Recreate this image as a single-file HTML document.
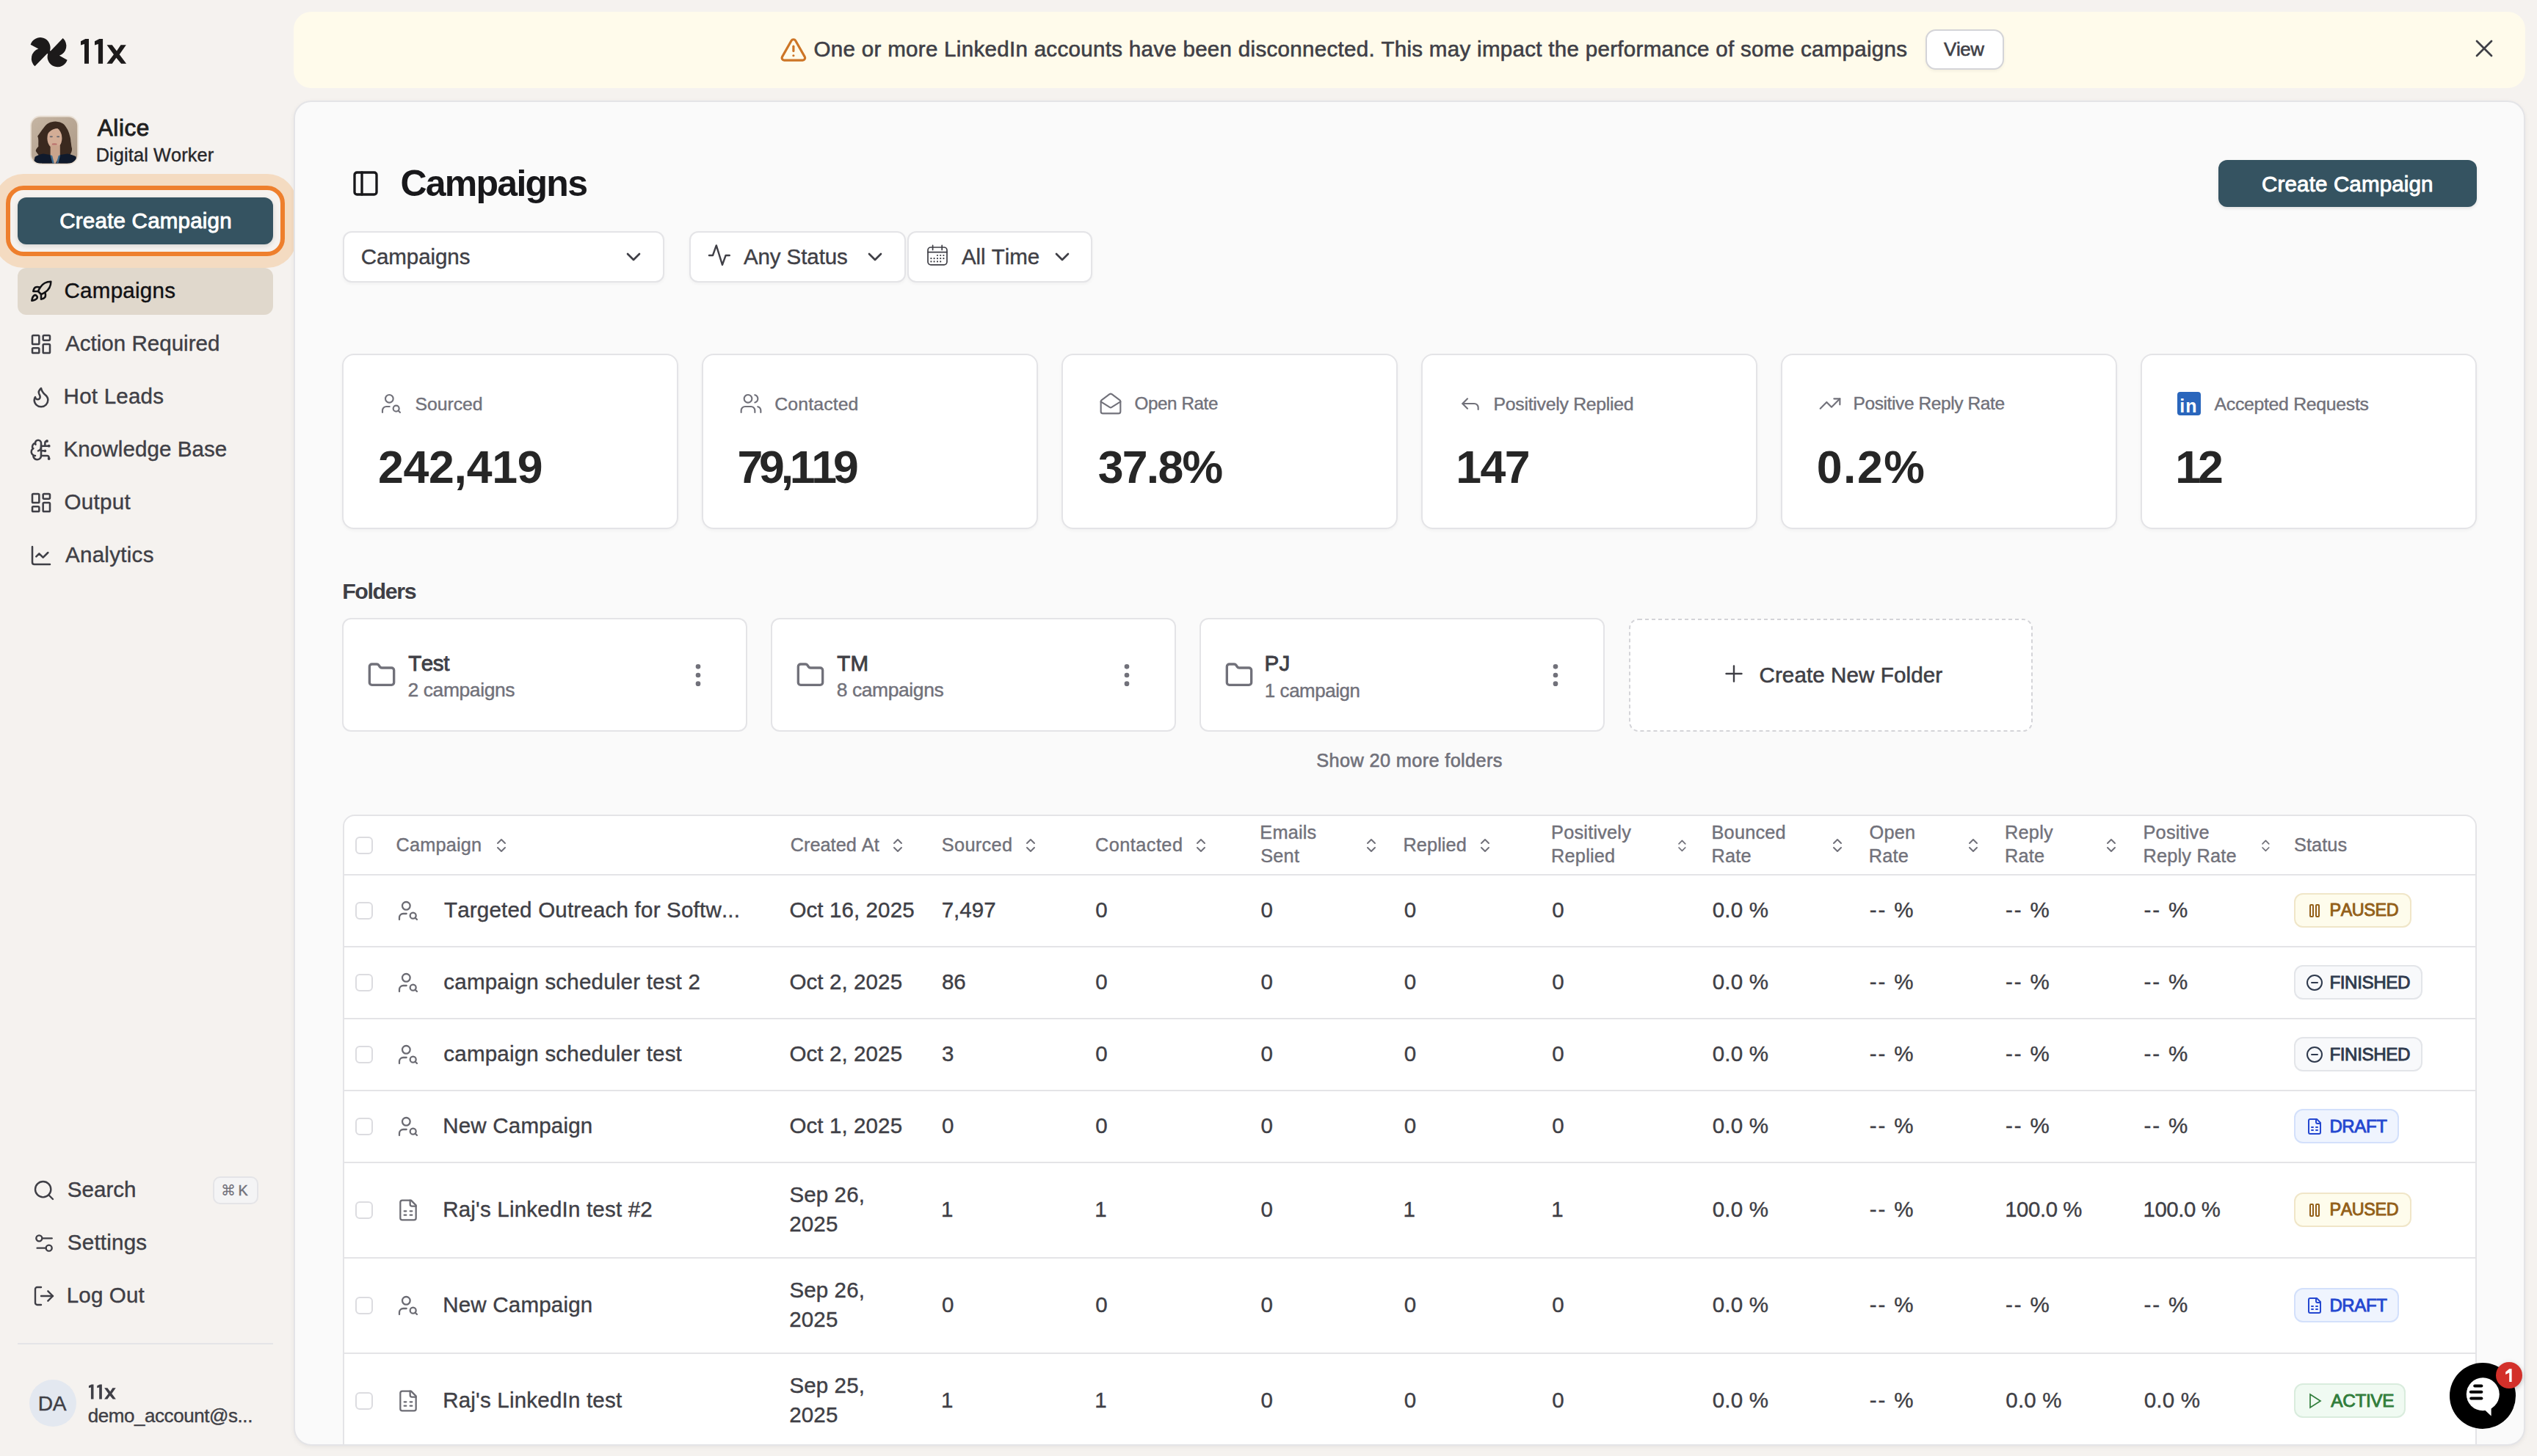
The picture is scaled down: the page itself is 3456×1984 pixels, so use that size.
<!DOCTYPE html>
<html><head><meta charset="utf-8"><title>Campaigns</title>
<style>
html,body{margin:0;padding:0;}
@media (min-width:2400px){ html{zoom:2;} }
body{width:1728px;height:992px;overflow:hidden;background:#f5f2ef;font-family:"Liberation Sans", sans-serif;position:relative;}
.t{position:absolute;white-space:nowrap;font-kerning:none;font-feature-settings:'kern' 0;}
.b{position:absolute;}
.ic{position:absolute;overflow:visible;}
</style></head><body>
<svg class="ic" style="left:18px;top:22px;width:32px;height:27px" viewBox="0 0 64 54"><g fill="#1c1a1a"><path d="M11.5 46.3 L31.9 25.2 A13.2 13.2 0 1 0 5.6 16.7 L16.3 22.6 A14 14 0 0 0 11.5 46.3 Z"/><path d="M49.7 8.1 L29.3 29.2 A13.2 13.2 0 1 0 55.6 37.7 L44.9 31.8 A14 14 0 0 0 49.7 8.1 Z"/><circle cx="30.6" cy="27.2" r="2.6"/></g></svg>
<svg class="ic" style="left:50px;top:22px;width:40px;height:27px" viewBox="0 0 80 54"><g fill="#1c1a1a"><path d="M10 12.2 L16.3 9.1 L21 9.1 L21 42.7 L15 42.7 L15 15.9 L10 17.4 Z"/><path d="M29 12.2 L35.3 9.1 L40.1 9.1 L40.1 42.7 L33.9 42.7 L33.9 15.9 L29 17.4 Z"/><path d="M45.6 17.2 L52.7 17.2 L59 25.6 L64.5 17.2 L71.8 17.2 L62.7 30.2 L72.1 42.7 L65.1 42.7 L58.4 34.7 L52.7 42.7 L45.4 42.7 L54.9 30.2 Z"/></g></svg>
<svg class="ic" style="left:20px;top:78.5px;width:34px;height:34px" viewBox="0 0 34 34"><defs><clipPath id="av"><rect x="1.4" y="1.2" width="31.2" height="31.6" rx="6"/></clipPath><linearGradient id="avbg" x1="0" y1="0" x2="1" y2="1"><stop offset="0" stop-color="#c6b6a4"/><stop offset="1" stop-color="#ab9885"/></linearGradient></defs><rect x="0.5" y="0.3" width="33" height="33.4" rx="7" fill="#e9e0d5"/><g clip-path="url(#av)"><rect x="0" y="0" width="34" height="34" fill="url(#avbg)"/><path d="M17.8 4.2 C14 4.3 11.8 5.8 10.2 8 C8.2 10.6 7 12.4 5.6 14.2 C6.6 16.5 5.9 19 6.2 21.2 C5.2 22.3 4.2 23.4 4.4 24.5 C5.4 26 6.6 27.4 7.2 28.6 L9 34 L25.8 34 L27.6 27.2 C28.6 25.6 29.2 24 29 22.6 C28.4 20.6 28.6 19.4 28.2 17.9 C28.2 16.4 27.9 15.2 27.6 14.2 C26.9 11.6 26.2 9.8 25.3 8.6 C24.2 6.4 22.6 4.6 17.8 4.2 Z" fill="#3a291f"/><ellipse cx="17.2" cy="15.6" rx="5" ry="7.1" fill="#d3ad96"/><path d="M11.8 8.8 C14 7.2 19.5 6.6 22.6 9.6 C21 8.9 18.4 8.7 16.2 9.6 C14.6 10.3 13 11.5 12 13.4 Z" fill="#3a291f"/><rect x="14.3" y="20.6" width="6.6" height="13.4" fill="#c9a48c"/><path d="M2.6 34 L3.8 28.4 C5.5 27.2 7.6 26.5 9.5 26.2 L14.2 27 L17.2 34 L21.1 27 L26 26.2 C28.2 26.6 30.4 27.3 31.8 28.2 L32.4 34 Z" fill="#101a2c"/><path d="M14.2 27 L15.6 27.6 L17.2 34 L16 34 Z" fill="#3f6b8c"/><path d="M21.1 27 L19.8 27.6 L18.2 34 L19.4 34 Z" fill="#3f6b8c"/><ellipse cx="14.9" cy="14.6" rx="1.1" ry="0.5" fill="#6b6a70"/><ellipse cx="19.6" cy="14.6" rx="1.1" ry="0.5" fill="#6b6a70"/><ellipse cx="17.1" cy="19.7" rx="1.8" ry="0.6" fill="#b9716c"/></g></svg>
<div class="t " style="left:66.37px;top:77.35px;font-size:15.8px;line-height:19.75px;color:#1f1f1f;font-weight:400;letter-spacing:0.272px;-webkit-text-stroke:0.45px #1f1f1f;">Alice</div>
<div class="t " style="left:65.36px;top:98.20px;font-size:12.66px;line-height:15.82px;color:#27272a;font-weight:400;letter-spacing:0.058px;-webkit-text-stroke:0.2px #27272a;">Digital Worker</div>
<div class="b" style="left:4.00px;top:126.50px;width:190.00px;height:47.80px;background:#f5f2ef;border:3px solid #ee7f2d;border-radius:12px;box-sizing:border-box;box-shadow:0 0 0 8px #f4dbc1;"></div>
<div class="b" style="left:12.00px;top:134.50px;width:174.00px;height:32.00px;background:#355361;border-radius:6px;box-shadow:0 1px 3px rgba(0,0,0,.12);"></div>
<div class="t " style="left:40.65px;top:141.25px;font-size:14.77px;line-height:18.46px;color:#ffffff;font-weight:400;letter-spacing:0.104px;-webkit-text-stroke:0.45px #ffffff;">Create Campaign</div>
<div class="b" style="left:12.00px;top:182.50px;width:174.00px;height:32.00px;background:#e0d8cc;border-radius:6px;"></div>
<svg class="ic" style="left:20.00px;top:190.50px;width:16px;height:16px;color:#111114;" viewBox="0 0 24 24" fill="none" stroke="currentColor" stroke-width="1.9" stroke-linecap="round" stroke-linejoin="round"><path d="M4.5 16.5c-1.5 1.26-2 5-2 5s3.74-.5 5-2c.71-.84.7-2.13-.09-2.91a2.18 2.18 0 0 0-2.91-.09z"/><path d="m12 15-3-3a22 22 0 0 1 2-3.95A12.88 12.88 0 0 1 22 2c0 2.72-.78 7.5-6 11a22.35 22.35 0 0 1-4 2z"/><path d="M9 12H4s.55-3.03 2-4c1.62-1.08 5 0 5 0"/><path d="M12 15v5s3.03-.55 4-2c1.08-1.62 0-5 0-5"/></svg>
<div class="t " style="left:43.75px;top:188.95px;font-size:14.77px;line-height:18.46px;color:#111114;font-weight:400;letter-spacing:0.134px;-webkit-text-stroke:0.2px #111114;">Campaigns</div>
<svg class="ic" style="left:20.00px;top:226.70px;width:16px;height:16px;color:#3f3f46;" viewBox="0 0 24 24" fill="none" stroke="currentColor" stroke-width="1.9" stroke-linecap="round" stroke-linejoin="round"><rect width="7" height="9" x="3" y="3" rx="1"/><rect width="7" height="5" x="14" y="3" rx="1"/><rect width="7" height="9" x="14" y="12" rx="1"/><rect width="7" height="5" x="3" y="16" rx="1"/></svg>
<div class="t " style="left:44.47px;top:225.15px;font-size:14.77px;line-height:18.46px;color:#3f3f46;font-weight:400;letter-spacing:0.013px;-webkit-text-stroke:0.2px #3f3f46;">Action Required</div>
<svg class="ic" style="left:20.00px;top:262.70px;width:16px;height:16px;color:#3f3f46;" viewBox="0 0 24 24" fill="none" stroke="currentColor" stroke-width="1.9" stroke-linecap="round" stroke-linejoin="round"><path d="M8.5 14.5A2.5 2.5 0 0 0 11 12c0-1.38-.5-2-1-3-1.072-2.143-.224-4.054 2-6 .5 2.5 2 4.9 4 6.5 2 1.6 3 3.5 3 5.5a7 7 0 1 1-14 0c0-1.153.433-2.294 1-3a2.5 2.5 0 0 0 2.5 2.5z"/></svg>
<div class="t " style="left:43.29px;top:261.15px;font-size:14.77px;line-height:18.46px;color:#3f3f46;font-weight:400;letter-spacing:0.114px;-webkit-text-stroke:0.2px #3f3f46;">Hot Leads</div>
<svg class="ic" style="left:20.00px;top:298.60px;width:16px;height:16px;color:#3f3f46;" viewBox="0 0 24 24" fill="none" stroke="currentColor" stroke-width="1.9" stroke-linecap="round" stroke-linejoin="round"><path d="M12 5a3 3 0 1 0-5.997.125 4 4 0 0 0-2.526 5.77 4 4 0 0 0 .556 6.588A4 4 0 1 0 12 18Z"/><path d="M9 13a4.5 4.5 0 0 0 3-4"/><path d="M12 13h4"/><path d="M12 18h6a2 2 0 0 1 2 2v1"/><path d="M12 8h8"/><path d="M16 8V5a2 2 0 0 1 2-2"/><circle cx="16" cy="13" r=".5"/><circle cx="18" cy="3" r=".5"/><circle cx="20" cy="21" r=".5"/><circle cx="20" cy="8" r=".5"/><path d="M6.003 5.125A3 3 0 0 0 6.401 6.5"/><path d="M3.477 10.896a4 4 0 0 1 .585-.396"/><path d="M6 18a4 4 0 0 1-1.967-.516"/></svg>
<div class="t " style="left:43.29px;top:297.05px;font-size:14.77px;line-height:18.46px;color:#3f3f46;font-weight:400;letter-spacing:0.040px;-webkit-text-stroke:0.2px #3f3f46;">Knowledge Base</div>
<svg class="ic" style="left:20.00px;top:334.60px;width:16px;height:16px;color:#3f3f46;" viewBox="0 0 24 24" fill="none" stroke="currentColor" stroke-width="1.9" stroke-linecap="round" stroke-linejoin="round"><rect width="7" height="9" x="3" y="3" rx="1"/><rect width="7" height="5" x="14" y="3" rx="1"/><rect width="7" height="9" x="14" y="12" rx="1"/><rect width="7" height="5" x="3" y="16" rx="1"/></svg>
<div class="t " style="left:43.80px;top:333.05px;font-size:14.77px;line-height:18.46px;color:#3f3f46;font-weight:400;letter-spacing:0.134px;-webkit-text-stroke:0.2px #3f3f46;">Output</div>
<svg class="ic" style="left:20.00px;top:370.40px;width:16px;height:16px;color:#3f3f46;" viewBox="0 0 24 24" fill="none" stroke="currentColor" stroke-width="1.9" stroke-linecap="round" stroke-linejoin="round"><path d="M3 3v16a2 2 0 0 0 2 2h16"/><path d="m19 9-5 5-4-4-3 3"/></svg>
<div class="t " style="left:44.47px;top:368.85px;font-size:14.77px;line-height:18.46px;color:#3f3f46;font-weight:400;letter-spacing:0.145px;-webkit-text-stroke:0.2px #3f3f46;">Analytics</div>
<svg class="ic" style="left:22.00px;top:803.20px;width:16px;height:16px;color:#3f3f46;" viewBox="0 0 24 24" fill="none" stroke="currentColor" stroke-width="1.8" stroke-linecap="round" stroke-linejoin="round"><circle cx="11" cy="11" r="8"/><path d="m21 21-4.3-4.3"/></svg>
<div class="t " style="left:45.93px;top:801.35px;font-size:14.77px;line-height:18.46px;color:#3f3f46;font-weight:400;letter-spacing:0.006px;-webkit-text-stroke:0.2px #3f3f46;">Search</div>
<svg class="ic" style="left:22.00px;top:839.20px;width:16px;height:16px;color:#3f3f46;" viewBox="0 0 24 24" fill="none" stroke="currentColor" stroke-width="1.8" stroke-linecap="round" stroke-linejoin="round"><path d="M20 7h-9"/><path d="M14 17H5"/><circle cx="17" cy="17" r="3"/><circle cx="7" cy="7" r="3"/></svg>
<div class="t " style="left:45.93px;top:837.35px;font-size:14.77px;line-height:18.46px;color:#3f3f46;font-weight:400;letter-spacing:0.105px;-webkit-text-stroke:0.2px #3f3f46;">Settings</div>
<svg class="ic" style="left:22.00px;top:874.80px;width:16px;height:16px;color:#3f3f46;" viewBox="0 0 24 24" fill="none" stroke="currentColor" stroke-width="1.8" stroke-linecap="round" stroke-linejoin="round"><path d="M9 21H5a2 2 0 0 1-2-2V5a2 2 0 0 1 2-2h4"/><polyline points="16 17 21 12 16 7"/><line x1="21" x2="9" y1="12" y2="12"/></svg>
<div class="t " style="left:45.39px;top:873.45px;font-size:14.77px;line-height:18.46px;color:#3f3f46;font-weight:400;letter-spacing:0.078px;-webkit-text-stroke:0.2px #3f3f46;">Log Out</div>
<div class="b" style="left:145.00px;top:801.40px;width:31.00px;height:19.00px;background:#f4f4f5;border:1px solid #e4e4e7;border-radius:5px;box-sizing:border-box;"></div>
<div class="t " style="left:150.30px;top:804.78px;font-size:10px;line-height:12.5px;color:#71717a;font-weight:400;letter-spacing:0.000px;">&#8984;</div>
<div class="t " style="left:162.19px;top:804.88px;font-size:9.9px;line-height:12.38px;color:#71717a;font-weight:400;letter-spacing:0.000px;-webkit-text-stroke:0.2px #71717a;">K</div>
<div class="b" style="left:12.00px;top:915.00px;width:174.00px;height:1.00px;background:#e4e4e7;"></div>
<div class="b" style="left:20.00px;top:940.00px;width:32.00px;height:32.00px;background:#e3e8f0;border-radius:50%;"></div>
<div class="t " style="left:25.84px;top:947.31px;font-size:14.098px;line-height:17.62px;color:#3f3f46;font-weight:400;letter-spacing:-0.200px;-webkit-text-stroke:0.2px #3f3f46;">DA</div>
<svg class="ic" style="left:57.42px;top:940.3px;width:23.8px;height:16.07px" viewBox="0 0 80 54"><g fill="#3f3f46"><path d="M10 12.2 L16.3 9.1 L21 9.1 L21 42.7 L15 42.7 L15 15.9 L10 17.4 Z"/><path d="M29 12.2 L35.3 9.1 L40.1 9.1 L40.1 42.7 L33.9 42.7 L33.9 15.9 L29 17.4 Z"/><path d="M45.6 17.2 L52.7 17.2 L59 25.6 L64.5 17.2 L71.8 17.2 L62.7 30.2 L72.1 42.7 L65.1 42.7 L58.4 34.7 L52.7 42.7 L45.4 42.7 L54.9 30.2 Z"/></g></svg>
<div class="t " style="left:59.85px;top:956.29px;font-size:12.979px;line-height:16.22px;color:#3f3f46;font-weight:400;letter-spacing:-0.200px;-webkit-text-stroke:0.2px #3f3f46;">demo_account@s...</div>
<div class="b" style="left:200.00px;top:8.00px;width:1520.00px;height:52.00px;background:#fffbeb;border-radius:12px;"></div>
<svg class="ic" style="left:530.75px;top:24.65px;width:18.9px;height:18.9px;color:#cd7526;" viewBox="0 0 24 24" fill="none" stroke="currentColor" stroke-width="2" stroke-linecap="round" stroke-linejoin="round"><path d="m21.73 18-8-14a2 2 0 0 0-3.48 0l-8 14A2 2 0 0 0 4 21h16a2 2 0 0 0 1.73-3"/><path d="M12 9v4"/><path d="M12 17h.01"/></svg>
<div class="t " style="left:554.30px;top:24.69px;font-size:14.77px;line-height:18.46px;color:#3f3f46;font-weight:400;letter-spacing:0.148px;-webkit-text-stroke:0.3px #3f3f46;">One or more LinkedIn accounts have been disconnected. This may impact the performance of some campaigns</div>
<div class="b" style="left:1311.40px;top:20.20px;width:53.40px;height:27.20px;background:#fff;border:1px solid #d4d4d8;border-radius:7px;box-sizing:border-box;box-shadow:0 1px 2px rgba(0,0,0,.05);"></div>
<div class="t " style="left:1324.04px;top:25.74px;font-size:12.93px;line-height:16.16px;color:#3f3f46;font-weight:400;letter-spacing:-0.200px;-webkit-text-stroke:0.3px #3f3f46;">View</div>
<svg class="ic" style="left:1681.90px;top:23.00px;width:20px;height:20px;color:#3f3f46;" viewBox="0 0 24 24" fill="none" stroke="currentColor" stroke-width="1.6" stroke-linecap="round" stroke-linejoin="round"><path d="M18 6 6 18"/><path d="m6 6 12 12"/></svg>
<div class="b" style="left:200.00px;top:68.50px;width:1520.00px;height:916.50px;background:#fafafa;border:1px solid #e4e4e7;border-radius:12px;box-sizing:border-box;box-shadow:0 1px 3px rgba(0,0,0,.06);"></div>
<svg class="ic" style="left:238.90px;top:114.85px;width:20px;height:20px;color:#18181b;" viewBox="0 0 24 24" fill="none" stroke="currentColor" stroke-width="2" stroke-linecap="round" stroke-linejoin="round"><rect width="18" height="18" x="3" y="3" rx="2"/><path d="M9 3v18"/></svg>
<div class="t " style="left:272.72px;top:109.71px;font-size:25px;line-height:31.25px;color:#18181b;font-weight:700;letter-spacing:-0.875px;">Campaigns</div>
<div class="b" style="left:1511.00px;top:109.00px;width:176.00px;height:32.00px;background:#355361;border-radius:6px;box-shadow:0 1px 2px rgba(0,0,0,.1);"></div>
<div class="t " style="left:1540.55px;top:116.35px;font-size:14.77px;line-height:18.46px;color:#ffffff;font-weight:400;letter-spacing:0.068px;-webkit-text-stroke:0.45px #ffffff;">Create Campaign</div>
<div class="b" style="left:233.30px;top:157.30px;width:219.00px;height:35.40px;background:#fff;border:1px solid #e4e4e7;border-radius:6px;box-sizing:border-box;box-shadow:0 1px 2px rgba(0,0,0,.04);"></div>
<div class="t " style="left:245.85px;top:165.95px;font-size:14.77px;line-height:18.46px;color:#3f3f46;font-weight:400;letter-spacing:-0.041px;-webkit-text-stroke:0.2px #3f3f46;">Campaigns</div>
<svg class="ic" style="left:423.50px;top:167.00px;width:16px;height:16px;color:#3f3f46;" viewBox="0 0 24 24" fill="none" stroke="currentColor" stroke-width="2" stroke-linecap="round" stroke-linejoin="round"><path d="m6 9 6 6 6-6"/></svg>
<div class="b" style="left:469.60px;top:157.30px;width:147.30px;height:35.40px;background:#fff;border:1px solid #e4e4e7;border-radius:6px;box-sizing:border-box;box-shadow:0 1px 2px rgba(0,0,0,.04);"></div>
<div class="t " style="left:506.47px;top:165.95px;font-size:14.77px;line-height:18.46px;color:#3f3f46;font-weight:400;letter-spacing:-0.052px;-webkit-text-stroke:0.2px #3f3f46;">Any Status</div>
<svg class="ic" style="left:588.00px;top:167.00px;width:16px;height:16px;color:#3f3f46;" viewBox="0 0 24 24" fill="none" stroke="currentColor" stroke-width="2" stroke-linecap="round" stroke-linejoin="round"><path d="m6 9 6 6 6-6"/></svg>
<div class="b" style="left:618.00px;top:157.30px;width:125.80px;height:35.40px;background:#fff;border:1px solid #e4e4e7;border-radius:6px;box-sizing:border-box;box-shadow:0 1px 2px rgba(0,0,0,.04);"></div>
<svg class="ic" style="left:0;top:0;width:1728px;height:992px;pointer-events:none" viewBox="0 0 1728 992" fill="none" stroke="#3f3f46" stroke-linecap="round" stroke-linejoin="round"><path d="M483 174 H485.5 L487.9 167.2 L492 180.4 L494.3 174 H496.9" stroke-width="1.2"/><rect x="632" y="168.5" width="13" height="11.9" rx="2" stroke-width="0.85"/><path d="M635.3 167.2v3M641.6 167.2v3M632 171.8h13" stroke-width="0.85"/><g fill="#3f3f46" stroke="none"><circle cx="638.5" cy="174" r=".55"/><circle cx="640.6" cy="174" r=".55"/><circle cx="642.7" cy="174" r=".55"/><circle cx="634.2" cy="176.1" r=".55"/><circle cx="636.3" cy="176.1" r=".55"/><circle cx="638.5" cy="176.1" r=".55"/><circle cx="640.6" cy="176.1" r=".55"/><circle cx="642.7" cy="176.1" r=".55"/><circle cx="634.2" cy="178.2" r=".55"/><circle cx="636.3" cy="178.2" r=".55"/><circle cx="638.5" cy="178.2" r=".55"/><circle cx="640.6" cy="178.2" r=".55"/></g></svg>
<div class="t " style="left:654.97px;top:165.95px;font-size:14.77px;line-height:18.46px;color:#3f3f46;font-weight:400;letter-spacing:-0.036px;-webkit-text-stroke:0.2px #3f3f46;">All Time</div>
<svg class="ic" style="left:715.50px;top:167.00px;width:16px;height:16px;color:#3f3f46;" viewBox="0 0 24 24" fill="none" stroke="currentColor" stroke-width="2" stroke-linecap="round" stroke-linejoin="round"><path d="m6 9 6 6 6-6"/></svg>
<div class="b" style="left:233.00px;top:241.20px;width:229.00px;height:119.20px;background:#fff;border:1px solid #e4e4e7;border-radius:8px;box-sizing:border-box;box-shadow:0 1px 2px rgba(0,0,0,.04);"></div>
<svg class="ic" style="left:258.60px;top:267.00px;width:16px;height:16px;color:#71717a;" viewBox="0 0 24 24" fill="none" stroke="currentColor" stroke-width="1.6" stroke-linecap="round" stroke-linejoin="round"><circle cx="10" cy="7" r="4"/><path d="M10.3 15H7a4 4 0 0 0-4 4v2"/><circle cx="17" cy="17" r="3"/><path d="m21 21-1.9-1.9"/></svg>
<div class="t " style="left:282.74px;top:267.45px;font-size:12.4px;line-height:15.5px;color:#71717a;font-weight:400;letter-spacing:-0.020px;-webkit-text-stroke:0.2px #71717a;">Sourced</div>
<div class="t " style="left:257.51px;top:298.49px;font-size:31.3px;line-height:39.12px;color:#262626;font-weight:700;letter-spacing:-0.149px;">242,419</div>
<div class="b" style="left:478.00px;top:241.20px;width:229.00px;height:119.20px;background:#fff;border:1px solid #e4e4e7;border-radius:8px;box-sizing:border-box;box-shadow:0 1px 2px rgba(0,0,0,.04);"></div>
<svg class="ic" style="left:503.60px;top:267.00px;width:16px;height:16px;color:#71717a;" viewBox="0 0 24 24" fill="none" stroke="currentColor" stroke-width="1.6" stroke-linecap="round" stroke-linejoin="round"><path d="M16 21v-2a4 4 0 0 0-4-4H6a4 4 0 0 0-4 4v2"/><circle cx="9" cy="7" r="4"/><path d="M22 21v-2a4 4 0 0 0-3-3.87"/><path d="M16 3.13a4 4 0 0 1 0 7.75"/></svg>
<div class="t " style="left:527.67px;top:267.45px;font-size:12.4px;line-height:15.5px;color:#71717a;font-weight:400;letter-spacing:0.063px;-webkit-text-stroke:0.2px #71717a;">Contacted</div>
<div class="t " style="left:502.26px;top:298.49px;font-size:31.3px;line-height:39.12px;color:#262626;font-weight:700;letter-spacing:-2.626px;">79,119</div>
<div class="b" style="left:723.00px;top:241.20px;width:229.00px;height:119.20px;background:#fff;border:1px solid #e4e4e7;border-radius:8px;box-sizing:border-box;box-shadow:0 1px 2px rgba(0,0,0,.04);"></div>
<svg class="ic" style="left:748.60px;top:267.00px;width:16px;height:16px;color:#71717a;" viewBox="0 0 24 24" fill="none" stroke="currentColor" stroke-width="1.6" stroke-linecap="round" stroke-linejoin="round"><path d="M21.2 8.4c.5.38.8.97.8 1.6v10a2 2 0 0 1-2 2H4a2 2 0 0 1-2-2V10a2 2 0 0 1 .8-1.6l8-6a2 2 0 0 1 2.4 0l8 6Z"/><path d="m22 10-8.97 5.7a1.94 1.94 0 0 1-2.06 0L2 10"/></svg>
<div class="t " style="left:772.73px;top:267.73px;font-size:12.119px;line-height:15.15px;color:#71717a;font-weight:400;letter-spacing:-0.200px;-webkit-text-stroke:0.2px #71717a;">Open Rate</div>
<div class="t " style="left:747.88px;top:298.49px;font-size:31.3px;line-height:39.12px;color:#262626;font-weight:700;letter-spacing:-0.876px;">37.8%</div>
<div class="b" style="left:968.00px;top:241.20px;width:229.00px;height:119.20px;background:#fff;border:1px solid #e4e4e7;border-radius:8px;box-sizing:border-box;box-shadow:0 1px 2px rgba(0,0,0,.04);"></div>
<svg class="ic" style="left:993.60px;top:267.00px;width:16px;height:16px;color:#71717a;" viewBox="0 0 24 24" fill="none" stroke="currentColor" stroke-width="1.6" stroke-linecap="round" stroke-linejoin="round"><polyline points="9 17 4 12 9 7"/><path d="M20 18v-2a4 4 0 0 0-4-4H4"/></svg>
<div class="t " style="left:1017.28px;top:267.45px;font-size:12.4px;line-height:15.5px;color:#71717a;font-weight:400;letter-spacing:-0.138px;-webkit-text-stroke:0.2px #71717a;">Positively Replied</div>
<div class="t " style="left:991.63px;top:298.49px;font-size:31.3px;line-height:39.12px;color:#262626;font-weight:700;letter-spacing:-0.788px;">147</div>
<div class="b" style="left:1213.00px;top:241.20px;width:229.00px;height:119.20px;background:#fff;border:1px solid #e4e4e7;border-radius:8px;box-sizing:border-box;box-shadow:0 1px 2px rgba(0,0,0,.04);"></div>
<svg class="ic" style="left:1238.60px;top:267.00px;width:16px;height:16px;color:#71717a;" viewBox="0 0 24 24" fill="none" stroke="currentColor" stroke-width="1.6" stroke-linecap="round" stroke-linejoin="round"><polyline points="22 7 13.5 15.5 8.5 10.5 2 17"/><polyline points="16 7 22 7 22 13"/></svg>
<div class="t " style="left:1262.30px;top:267.60px;font-size:12.245px;line-height:15.31px;color:#71717a;font-weight:400;letter-spacing:-0.200px;-webkit-text-stroke:0.2px #71717a;">Positive Reply Rate</div>
<div class="t " style="left:1237.36px;top:298.49px;font-size:31.3px;line-height:39.12px;color:#262626;font-weight:700;letter-spacing:0.740px;">0.2%</div>
<div class="b" style="left:1458.00px;top:241.20px;width:229.00px;height:119.20px;background:#fff;border:1px solid #e4e4e7;border-radius:8px;box-sizing:border-box;box-shadow:0 1px 2px rgba(0,0,0,.04);"></div>
<div class="b" style="left:1483.20px;top:267px;width:16px;height:16px;background:#2a66bc;border-radius:2px;"></div>
<div class="t " style="left:1484.63px;top:268.96px;font-size:12.5px;line-height:15.62px;color:#fff;font-weight:700;letter-spacing:0.540px;">in</div>
<div class="t " style="left:1508.28px;top:267.45px;font-size:12.4px;line-height:15.5px;color:#71717a;font-weight:400;letter-spacing:-0.147px;-webkit-text-stroke:0.2px #71717a;">Accepted Requests</div>
<div class="t " style="left:1481.63px;top:298.49px;font-size:31.3px;line-height:39.12px;color:#262626;font-weight:700;letter-spacing:-2.090px;">12</div>
<div class="t " style="left:233.08px;top:393.03px;font-size:15.2px;line-height:19.0px;color:#3f3f46;font-weight:700;letter-spacing:-0.693px;">Folders</div>
<div class="b" style="left:233.20px;top:421.00px;width:275.80px;height:77.50px;background:#fff;border:1px solid #e4e4e7;border-radius:6px;box-sizing:border-box;"></div>
<svg class="ic" style="left:250.00px;top:449.90px;width:20px;height:20px;color:#71717a;" viewBox="0 0 24 24" fill="none" stroke="currentColor" stroke-width="2" stroke-linecap="round" stroke-linejoin="round"><path d="M20 20a2 2 0 0 0 2-2V8a2 2 0 0 0-2-2h-7.9a2 2 0 0 1-1.69-.9L9.6 3.9A2 2 0 0 0 7.93 3H4a2 2 0 0 0-2 2v13a2 2 0 0 0 2 2Z"/></svg>
<div class="t " style="left:278.07px;top:442.75px;font-size:14.77px;line-height:18.46px;color:#3f3f46;font-weight:400;letter-spacing:-0.195px;-webkit-text-stroke:0.45px #3f3f46;">Test</div>
<div class="t " style="left:277.73px;top:462.24px;font-size:13.235px;line-height:16.54px;color:#71717a;font-weight:400;letter-spacing:-0.200px;-webkit-text-stroke:0.2px #71717a;">2 campaigns</div>
<svg class="ic" style="left:465.70px;top:450.00px;width:20px;height:20px;color:#71717a;" viewBox="0 0 24 24" fill="none" stroke="currentColor" stroke-width="2" stroke-linecap="round" stroke-linejoin="round"><circle cx="12" cy="5" r="1"/><circle cx="12" cy="12" r="1"/><circle cx="12" cy="19" r="1"/></svg>
<div class="b" style="left:525.20px;top:421.00px;width:275.80px;height:77.50px;background:#fff;border:1px solid #e4e4e7;border-radius:6px;box-sizing:border-box;"></div>
<svg class="ic" style="left:542.00px;top:449.90px;width:20px;height:20px;color:#71717a;" viewBox="0 0 24 24" fill="none" stroke="currentColor" stroke-width="2" stroke-linecap="round" stroke-linejoin="round"><path d="M20 20a2 2 0 0 0 2-2V8a2 2 0 0 0-2-2h-7.9a2 2 0 0 1-1.69-.9L9.6 3.9A2 2 0 0 0 7.93 3H4a2 2 0 0 0-2 2v13a2 2 0 0 0 2 2Z"/></svg>
<div class="t " style="left:570.07px;top:442.75px;font-size:14.77px;line-height:18.46px;color:#3f3f46;font-weight:400;letter-spacing:0.200px;-webkit-text-stroke:0.45px #3f3f46;">TM</div>
<div class="t " style="left:569.82px;top:462.24px;font-size:13.237px;line-height:16.55px;color:#71717a;font-weight:400;letter-spacing:-0.200px;-webkit-text-stroke:0.2px #71717a;">8 campaigns</div>
<svg class="ic" style="left:757.70px;top:450.00px;width:20px;height:20px;color:#71717a;" viewBox="0 0 24 24" fill="none" stroke="currentColor" stroke-width="2" stroke-linecap="round" stroke-linejoin="round"><circle cx="12" cy="5" r="1"/><circle cx="12" cy="12" r="1"/><circle cx="12" cy="19" r="1"/></svg>
<div class="b" style="left:817.20px;top:421.00px;width:275.80px;height:77.50px;background:#fff;border:1px solid #e4e4e7;border-radius:6px;box-sizing:border-box;"></div>
<svg class="ic" style="left:834.00px;top:449.90px;width:20px;height:20px;color:#71717a;" viewBox="0 0 24 24" fill="none" stroke="currentColor" stroke-width="2" stroke-linecap="round" stroke-linejoin="round"><path d="M20 20a2 2 0 0 0 2-2V8a2 2 0 0 0-2-2h-7.9a2 2 0 0 1-1.69-.9L9.6 3.9A2 2 0 0 0 7.93 3H4a2 2 0 0 0-2 2v13a2 2 0 0 0 2 2Z"/></svg>
<div class="t " style="left:861.19px;top:442.75px;font-size:14.77px;line-height:18.46px;color:#3f3f46;font-weight:400;letter-spacing:0.171px;-webkit-text-stroke:0.45px #3f3f46;">PJ</div>
<div class="t " style="left:861.41px;top:462.52px;font-size:12.945px;line-height:16.18px;color:#71717a;font-weight:400;letter-spacing:-0.200px;-webkit-text-stroke:0.2px #71717a;">1 campaign</div>
<svg class="ic" style="left:1049.70px;top:450.00px;width:20px;height:20px;color:#71717a;" viewBox="0 0 24 24" fill="none" stroke="currentColor" stroke-width="2" stroke-linecap="round" stroke-linejoin="round"><circle cx="12" cy="5" r="1"/><circle cx="12" cy="12" r="1"/><circle cx="12" cy="19" r="1"/></svg>
<svg class="ic" style="left:1109.5px;top:421.5px;width:275px;height:77px" viewBox="0 0 275 77"><rect x="0.5" y="0.5" width="274" height="76" rx="6" fill="#fff" stroke="#d4d4d8" stroke-width="1" stroke-dasharray="2.5 2"/></svg>
<svg class="ic" style="left:1172.00px;top:450.00px;width:18px;height:18px;color:#3f3f46;" viewBox="0 0 24 24" fill="none" stroke="currentColor" stroke-width="1.6" stroke-linecap="round" stroke-linejoin="round"><path d="M5 12h14"/><path d="M12 5v14"/></svg>
<div class="t " style="left:1198.25px;top:450.95px;font-size:14.77px;line-height:18.46px;color:#3f3f46;font-weight:400;letter-spacing:0.053px;-webkit-text-stroke:0.3px #3f3f46;">Create New Folder</div>
<div class="t " style="left:896.63px;top:510.50px;font-size:12.66px;line-height:15.82px;color:#71717a;font-weight:400;letter-spacing:0.184px;-webkit-text-stroke:0.3px #71717a;">Show 20 more folders</div>
<div style="position:absolute;left:0;top:0;width:1728px;height:984px;overflow:hidden">
<div class="b" style="left:233.50px;top:555.00px;width:1453.50px;height:440.00px;background:#fff;border:1px solid #e4e4e7;border-radius:8px;box-sizing:border-box;"></div>
<div class="b" style="left:234.00px;top:595.50px;width:1452.00px;height:1.00px;background:#e4e4e7;"></div>
<div class="b" style="left:242.20px;top:570.10px;width:11.80px;height:11.80px;background:#fff;border:1px solid #dcdce0;border-radius:3px;box-sizing:border-box;"></div>
<div class="t " style="left:269.76px;top:567.90px;font-size:12.66px;line-height:15.82px;color:#71717a;font-weight:400;letter-spacing:0.080px;-webkit-text-stroke:0.2px #71717a;">Campaign</div>
<svg class="ic" style="left:335.50px;top:570.00px;width:12px;height:12px;color:#71717a;" viewBox="0 0 24 24" fill="none" stroke="currentColor" stroke-width="2" stroke-linecap="round" stroke-linejoin="round"><path d="m7 15 5 5 5-5"/><path d="m7 9 5-5 5 5"/></svg>
<div class="t " style="left:538.36px;top:567.90px;font-size:12.66px;line-height:15.82px;color:#71717a;font-weight:400;letter-spacing:0.002px;-webkit-text-stroke:0.2px #71717a;">Created At</div>
<svg class="ic" style="left:605.50px;top:570.00px;width:12px;height:12px;color:#71717a;" viewBox="0 0 24 24" fill="none" stroke="currentColor" stroke-width="2" stroke-linecap="round" stroke-linejoin="round"><path d="m7 15 5 5 5-5"/><path d="m7 9 5-5 5 5"/></svg>
<div class="t " style="left:641.43px;top:567.90px;font-size:12.66px;line-height:15.82px;color:#71717a;font-weight:400;letter-spacing:0.156px;-webkit-text-stroke:0.2px #71717a;">Sourced</div>
<svg class="ic" style="left:696.00px;top:570.00px;width:12px;height:12px;color:#71717a;" viewBox="0 0 24 24" fill="none" stroke="currentColor" stroke-width="2" stroke-linecap="round" stroke-linejoin="round"><path d="m7 15 5 5 5-5"/><path d="m7 9 5-5 5 5"/></svg>
<div class="t " style="left:745.96px;top:567.90px;font-size:12.66px;line-height:15.82px;color:#71717a;font-weight:400;letter-spacing:0.231px;-webkit-text-stroke:0.2px #71717a;">Contacted</div>
<svg class="ic" style="left:812.00px;top:570.00px;width:12px;height:12px;color:#71717a;" viewBox="0 0 24 24" fill="none" stroke="currentColor" stroke-width="2" stroke-linecap="round" stroke-linejoin="round"><path d="m7 15 5 5 5-5"/><path d="m7 9 5-5 5 5"/></svg>
<div class="t " style="left:955.76px;top:567.90px;font-size:12.66px;line-height:15.82px;color:#71717a;font-weight:400;letter-spacing:0.037px;-webkit-text-stroke:0.2px #71717a;">Replied</div>
<svg class="ic" style="left:1005.50px;top:570.00px;width:12px;height:12px;color:#71717a;" viewBox="0 0 24 24" fill="none" stroke="currentColor" stroke-width="2" stroke-linecap="round" stroke-linejoin="round"><path d="m7 15 5 5 5-5"/><path d="m7 9 5-5 5 5"/></svg>
<div class="t " style="left:858.16px;top:559.70px;font-size:12.66px;line-height:15.82px;color:#71717a;font-weight:400;letter-spacing:0.100px;-webkit-text-stroke:0.2px #71717a;">Emails</div>
<div class="t " style="left:858.63px;top:575.30px;font-size:12.66px;line-height:15.82px;color:#71717a;font-weight:400;letter-spacing:0.100px;-webkit-text-stroke:0.2px #71717a;">Sent</div>
<svg class="ic" style="left:928.00px;top:570.00px;width:12px;height:12px;color:#71717a;" viewBox="0 0 24 24" fill="none" stroke="currentColor" stroke-width="2" stroke-linecap="round" stroke-linejoin="round"><path d="m7 15 5 5 5-5"/><path d="m7 9 5-5 5 5"/></svg>
<div class="t " style="left:1056.56px;top:559.70px;font-size:12.66px;line-height:15.82px;color:#71717a;font-weight:400;letter-spacing:0.100px;-webkit-text-stroke:0.2px #71717a;">Positively</div>
<div class="t " style="left:1056.56px;top:575.30px;font-size:12.66px;line-height:15.82px;color:#71717a;font-weight:400;letter-spacing:0.100px;-webkit-text-stroke:0.2px #71717a;">Replied</div>
<svg class="ic" style="left:1140.30px;top:570.80px;width:10.4px;height:10.4px;color:#71717a;" viewBox="0 0 24 24" fill="none" stroke="currentColor" stroke-width="2" stroke-linecap="round" stroke-linejoin="round"><path d="m7 15 5 5 5-5"/><path d="m7 9 5-5 5 5"/></svg>
<div class="t " style="left:1165.76px;top:559.70px;font-size:12.66px;line-height:15.82px;color:#71717a;font-weight:400;letter-spacing:0.100px;-webkit-text-stroke:0.2px #71717a;">Bounced</div>
<div class="t " style="left:1165.76px;top:575.30px;font-size:12.66px;line-height:15.82px;color:#71717a;font-weight:400;letter-spacing:0.100px;-webkit-text-stroke:0.2px #71717a;">Rate</div>
<svg class="ic" style="left:1245.50px;top:570.00px;width:12px;height:12px;color:#71717a;" viewBox="0 0 24 24" fill="none" stroke="currentColor" stroke-width="2" stroke-linecap="round" stroke-linejoin="round"><path d="m7 15 5 5 5-5"/><path d="m7 9 5-5 5 5"/></svg>
<div class="t " style="left:1273.30px;top:559.70px;font-size:12.66px;line-height:15.82px;color:#71717a;font-weight:400;letter-spacing:0.100px;-webkit-text-stroke:0.2px #71717a;">Open</div>
<div class="t " style="left:1272.86px;top:575.30px;font-size:12.66px;line-height:15.82px;color:#71717a;font-weight:400;letter-spacing:0.100px;-webkit-text-stroke:0.2px #71717a;">Rate</div>
<svg class="ic" style="left:1338.00px;top:570.00px;width:12px;height:12px;color:#71717a;" viewBox="0 0 24 24" fill="none" stroke="currentColor" stroke-width="2" stroke-linecap="round" stroke-linejoin="round"><path d="m7 15 5 5 5-5"/><path d="m7 9 5-5 5 5"/></svg>
<div class="t " style="left:1365.56px;top:559.70px;font-size:12.66px;line-height:15.82px;color:#71717a;font-weight:400;letter-spacing:0.100px;-webkit-text-stroke:0.2px #71717a;">Reply</div>
<div class="t " style="left:1365.56px;top:575.30px;font-size:12.66px;line-height:15.82px;color:#71717a;font-weight:400;letter-spacing:0.100px;-webkit-text-stroke:0.2px #71717a;">Rate</div>
<svg class="ic" style="left:1432.00px;top:570.00px;width:12px;height:12px;color:#71717a;" viewBox="0 0 24 24" fill="none" stroke="currentColor" stroke-width="2" stroke-linecap="round" stroke-linejoin="round"><path d="m7 15 5 5 5-5"/><path d="m7 9 5-5 5 5"/></svg>
<div class="t " style="left:1459.76px;top:559.70px;font-size:12.66px;line-height:15.82px;color:#71717a;font-weight:400;letter-spacing:0.100px;-webkit-text-stroke:0.2px #71717a;">Positive</div>
<div class="t " style="left:1459.76px;top:575.30px;font-size:12.66px;line-height:15.82px;color:#71717a;font-weight:400;letter-spacing:0.100px;-webkit-text-stroke:0.2px #71717a;">Reply Rate</div>
<svg class="ic" style="left:1537.80px;top:570.80px;width:10.4px;height:10.4px;color:#71717a;" viewBox="0 0 24 24" fill="none" stroke="currentColor" stroke-width="2" stroke-linecap="round" stroke-linejoin="round"><path d="m7 15 5 5 5-5"/><path d="m7 9 5-5 5 5"/></svg>
<div class="t " style="left:1562.53px;top:567.90px;font-size:12.66px;line-height:15.82px;color:#71717a;font-weight:400;letter-spacing:0.028px;-webkit-text-stroke:0.2px #71717a;">Status</div>
<div class="b" style="left:242.20px;top:614.60px;width:11.80px;height:11.80px;background:#fff;border:1px solid #dcdce0;border-radius:3px;box-sizing:border-box;"></div>
<svg class="ic" style="left:270.00px;top:612.50px;width:16px;height:16px;color:#6b6b73;" viewBox="0 0 24 24" fill="none" stroke="currentColor" stroke-width="1.7" stroke-linecap="round" stroke-linejoin="round"><circle cx="10" cy="7" r="4"/><path d="M10.3 15H7a4 4 0 0 0-4 4v2"/><circle cx="17" cy="17" r="3"/><path d="m21 21-1.9-1.9"/></svg>
<div class="t " style="left:302.47px;top:611.05px;font-size:14.77px;line-height:18.46px;color:#3f3f46;font-weight:400;letter-spacing:0.100px;-webkit-text-stroke:0.2px #3f3f46;">Targeted Outreach for Softw...</div>
<div class="t " style="left:537.70px;top:611.05px;font-size:14.77px;line-height:18.46px;color:#3f3f46;font-weight:400;letter-spacing:0.050px;-webkit-text-stroke:0.2px #3f3f46;">Oct 16, 2025</div>
<div class="t " style="left:641.34px;top:611.05px;font-size:14.77px;line-height:18.46px;color:#3f3f46;font-weight:400;letter-spacing:0.000px;-webkit-text-stroke:0.2px #3f3f46;">7,497</div>
<div class="t " style="left:746.12px;top:611.05px;font-size:14.77px;line-height:18.46px;color:#3f3f46;font-weight:400;letter-spacing:0.000px;-webkit-text-stroke:0.2px #3f3f46;">0</div>
<div class="t " style="left:858.72px;top:611.05px;font-size:14.77px;line-height:18.46px;color:#3f3f46;font-weight:400;letter-spacing:0.000px;-webkit-text-stroke:0.2px #3f3f46;">0</div>
<div class="t " style="left:956.32px;top:611.05px;font-size:14.77px;line-height:18.46px;color:#3f3f46;font-weight:400;letter-spacing:0.000px;-webkit-text-stroke:0.2px #3f3f46;">0</div>
<div class="t " style="left:1057.12px;top:611.05px;font-size:14.77px;line-height:18.46px;color:#3f3f46;font-weight:400;letter-spacing:0.000px;-webkit-text-stroke:0.2px #3f3f46;">0</div>
<div class="t " style="left:1166.32px;top:611.05px;font-size:14.77px;line-height:18.46px;color:#3f3f46;font-weight:400;letter-spacing:0.109px;-webkit-text-stroke:0.2px #3f3f46;">0.0 %</div>
<div class="t " style="left:1273.34px;top:611.05px;font-size:14.77px;line-height:18.46px;color:#3f3f46;font-weight:400;letter-spacing:0.936px;-webkit-text-stroke:0.2px #3f3f46;">-- %</div>
<div class="t " style="left:1366.04px;top:611.05px;font-size:14.77px;line-height:18.46px;color:#3f3f46;font-weight:400;letter-spacing:0.936px;-webkit-text-stroke:0.2px #3f3f46;">-- %</div>
<div class="t " style="left:1460.24px;top:611.05px;font-size:14.77px;line-height:18.46px;color:#3f3f46;font-weight:400;letter-spacing:0.936px;-webkit-text-stroke:0.2px #3f3f46;">-- %</div>
<div class="b" style="left:1562.70px;top:608.25px;width:79.60px;height:23.50px;background:#fefcec;border:1px solid #f0e6c8;border-radius:6px;box-sizing:border-box;"></div>
<svg class="ic" style="left:1570.50px;top:614.25px;width:12px;height:12px;color:#935f18;" viewBox="0 0 24 24" fill="none" stroke="currentColor" stroke-width="2" stroke-linecap="round" stroke-linejoin="round"><rect x="14" y="4" width="4" height="16" rx="1"/><rect x="6" y="4" width="4" height="16" rx="1"/></svg>
<div class="t " style="left:1586.74px;top:613.23px;font-size:11.701px;line-height:14.63px;color:#935f18;font-weight:400;letter-spacing:-0.200px;-webkit-text-stroke:0.45px #935f18;">PAUSED</div>
<div class="b" style="left:234.00px;top:644.50px;width:1452.00px;height:1.00px;background:#e4e4e7;"></div>
<div class="b" style="left:242.20px;top:663.60px;width:11.80px;height:11.80px;background:#fff;border:1px solid #dcdce0;border-radius:3px;box-sizing:border-box;"></div>
<svg class="ic" style="left:270.00px;top:661.50px;width:16px;height:16px;color:#6b6b73;" viewBox="0 0 24 24" fill="none" stroke="currentColor" stroke-width="1.7" stroke-linecap="round" stroke-linejoin="round"><circle cx="10" cy="7" r="4"/><path d="M10.3 15H7a4 4 0 0 0-4 4v2"/><circle cx="17" cy="17" r="3"/><path d="m21 21-1.9-1.9"/></svg>
<div class="t " style="left:302.17px;top:660.05px;font-size:14.77px;line-height:18.46px;color:#3f3f46;font-weight:400;letter-spacing:0.100px;-webkit-text-stroke:0.2px #3f3f46;">campaign scheduler test 2</div>
<div class="t " style="left:537.70px;top:660.05px;font-size:14.77px;line-height:18.46px;color:#3f3f46;font-weight:400;letter-spacing:0.050px;-webkit-text-stroke:0.2px #3f3f46;">Oct 2, 2025</div>
<div class="t " style="left:641.46px;top:660.05px;font-size:14.77px;line-height:18.46px;color:#3f3f46;font-weight:400;letter-spacing:0.000px;-webkit-text-stroke:0.2px #3f3f46;">86</div>
<div class="t " style="left:746.12px;top:660.05px;font-size:14.77px;line-height:18.46px;color:#3f3f46;font-weight:400;letter-spacing:0.000px;-webkit-text-stroke:0.2px #3f3f46;">0</div>
<div class="t " style="left:858.72px;top:660.05px;font-size:14.77px;line-height:18.46px;color:#3f3f46;font-weight:400;letter-spacing:0.000px;-webkit-text-stroke:0.2px #3f3f46;">0</div>
<div class="t " style="left:956.32px;top:660.05px;font-size:14.77px;line-height:18.46px;color:#3f3f46;font-weight:400;letter-spacing:0.000px;-webkit-text-stroke:0.2px #3f3f46;">0</div>
<div class="t " style="left:1057.12px;top:660.05px;font-size:14.77px;line-height:18.46px;color:#3f3f46;font-weight:400;letter-spacing:0.000px;-webkit-text-stroke:0.2px #3f3f46;">0</div>
<div class="t " style="left:1166.32px;top:660.05px;font-size:14.77px;line-height:18.46px;color:#3f3f46;font-weight:400;letter-spacing:0.109px;-webkit-text-stroke:0.2px #3f3f46;">0.0 %</div>
<div class="t " style="left:1273.34px;top:660.05px;font-size:14.77px;line-height:18.46px;color:#3f3f46;font-weight:400;letter-spacing:0.936px;-webkit-text-stroke:0.2px #3f3f46;">-- %</div>
<div class="t " style="left:1366.04px;top:660.05px;font-size:14.77px;line-height:18.46px;color:#3f3f46;font-weight:400;letter-spacing:0.936px;-webkit-text-stroke:0.2px #3f3f46;">-- %</div>
<div class="t " style="left:1460.24px;top:660.05px;font-size:14.77px;line-height:18.46px;color:#3f3f46;font-weight:400;letter-spacing:0.936px;-webkit-text-stroke:0.2px #3f3f46;">-- %</div>
<div class="b" style="left:1562.70px;top:657.25px;width:87.10px;height:23.50px;background:#f8f9fb;border:1px solid #e3e5e9;border-radius:6px;box-sizing:border-box;"></div>
<svg class="ic" style="left:1570.50px;top:663.25px;width:12px;height:12px;color:#2f3a4d;" viewBox="0 0 24 24" fill="none" stroke="currentColor" stroke-width="2" stroke-linecap="round" stroke-linejoin="round"><circle cx="12" cy="12" r="10"/><path d="M8 12h8"/></svg>
<div class="t " style="left:1586.71px;top:661.85px;font-size:12.1px;line-height:15.12px;color:#2f3a4d;font-weight:400;letter-spacing:-0.200px;-webkit-text-stroke:0.45px #2f3a4d;">FINISHED</div>
<div class="b" style="left:234.00px;top:693.50px;width:1452.00px;height:1.00px;background:#e4e4e7;"></div>
<div class="b" style="left:242.20px;top:712.60px;width:11.80px;height:11.80px;background:#fff;border:1px solid #dcdce0;border-radius:3px;box-sizing:border-box;"></div>
<svg class="ic" style="left:270.00px;top:710.50px;width:16px;height:16px;color:#6b6b73;" viewBox="0 0 24 24" fill="none" stroke="currentColor" stroke-width="1.7" stroke-linecap="round" stroke-linejoin="round"><circle cx="10" cy="7" r="4"/><path d="M10.3 15H7a4 4 0 0 0-4 4v2"/><circle cx="17" cy="17" r="3"/><path d="m21 21-1.9-1.9"/></svg>
<div class="t " style="left:302.17px;top:709.05px;font-size:14.77px;line-height:18.46px;color:#3f3f46;font-weight:400;letter-spacing:0.100px;-webkit-text-stroke:0.2px #3f3f46;">campaign scheduler test</div>
<div class="t " style="left:537.70px;top:709.05px;font-size:14.77px;line-height:18.46px;color:#3f3f46;font-weight:400;letter-spacing:0.050px;-webkit-text-stroke:0.2px #3f3f46;">Oct 2, 2025</div>
<div class="t " style="left:641.54px;top:709.05px;font-size:14.77px;line-height:18.46px;color:#3f3f46;font-weight:400;letter-spacing:0.000px;-webkit-text-stroke:0.2px #3f3f46;">3</div>
<div class="t " style="left:746.12px;top:709.05px;font-size:14.77px;line-height:18.46px;color:#3f3f46;font-weight:400;letter-spacing:0.000px;-webkit-text-stroke:0.2px #3f3f46;">0</div>
<div class="t " style="left:858.72px;top:709.05px;font-size:14.77px;line-height:18.46px;color:#3f3f46;font-weight:400;letter-spacing:0.000px;-webkit-text-stroke:0.2px #3f3f46;">0</div>
<div class="t " style="left:956.32px;top:709.05px;font-size:14.77px;line-height:18.46px;color:#3f3f46;font-weight:400;letter-spacing:0.000px;-webkit-text-stroke:0.2px #3f3f46;">0</div>
<div class="t " style="left:1057.12px;top:709.05px;font-size:14.77px;line-height:18.46px;color:#3f3f46;font-weight:400;letter-spacing:0.000px;-webkit-text-stroke:0.2px #3f3f46;">0</div>
<div class="t " style="left:1166.32px;top:709.05px;font-size:14.77px;line-height:18.46px;color:#3f3f46;font-weight:400;letter-spacing:0.109px;-webkit-text-stroke:0.2px #3f3f46;">0.0 %</div>
<div class="t " style="left:1273.34px;top:709.05px;font-size:14.77px;line-height:18.46px;color:#3f3f46;font-weight:400;letter-spacing:0.936px;-webkit-text-stroke:0.2px #3f3f46;">-- %</div>
<div class="t " style="left:1366.04px;top:709.05px;font-size:14.77px;line-height:18.46px;color:#3f3f46;font-weight:400;letter-spacing:0.936px;-webkit-text-stroke:0.2px #3f3f46;">-- %</div>
<div class="t " style="left:1460.24px;top:709.05px;font-size:14.77px;line-height:18.46px;color:#3f3f46;font-weight:400;letter-spacing:0.936px;-webkit-text-stroke:0.2px #3f3f46;">-- %</div>
<div class="b" style="left:1562.70px;top:706.25px;width:87.10px;height:23.50px;background:#f8f9fb;border:1px solid #e3e5e9;border-radius:6px;box-sizing:border-box;"></div>
<svg class="ic" style="left:1570.50px;top:712.25px;width:12px;height:12px;color:#2f3a4d;" viewBox="0 0 24 24" fill="none" stroke="currentColor" stroke-width="2" stroke-linecap="round" stroke-linejoin="round"><circle cx="12" cy="12" r="10"/><path d="M8 12h8"/></svg>
<div class="t " style="left:1586.71px;top:710.85px;font-size:12.1px;line-height:15.12px;color:#2f3a4d;font-weight:400;letter-spacing:-0.200px;-webkit-text-stroke:0.45px #2f3a4d;">FINISHED</div>
<div class="b" style="left:234.00px;top:742.50px;width:1452.00px;height:1.00px;background:#e4e4e7;"></div>
<div class="b" style="left:242.20px;top:761.60px;width:11.80px;height:11.80px;background:#fff;border:1px solid #dcdce0;border-radius:3px;box-sizing:border-box;"></div>
<svg class="ic" style="left:270.00px;top:759.50px;width:16px;height:16px;color:#6b6b73;" viewBox="0 0 24 24" fill="none" stroke="currentColor" stroke-width="1.7" stroke-linecap="round" stroke-linejoin="round"><circle cx="10" cy="7" r="4"/><path d="M10.3 15H7a4 4 0 0 0-4 4v2"/><circle cx="17" cy="17" r="3"/><path d="m21 21-1.9-1.9"/></svg>
<div class="t " style="left:301.59px;top:758.05px;font-size:14.77px;line-height:18.46px;color:#3f3f46;font-weight:400;letter-spacing:0.100px;-webkit-text-stroke:0.2px #3f3f46;">New Campaign</div>
<div class="t " style="left:537.70px;top:758.05px;font-size:14.77px;line-height:18.46px;color:#3f3f46;font-weight:400;letter-spacing:0.050px;-webkit-text-stroke:0.2px #3f3f46;">Oct 1, 2025</div>
<div class="t " style="left:641.52px;top:758.05px;font-size:14.77px;line-height:18.46px;color:#3f3f46;font-weight:400;letter-spacing:0.000px;-webkit-text-stroke:0.2px #3f3f46;">0</div>
<div class="t " style="left:746.12px;top:758.05px;font-size:14.77px;line-height:18.46px;color:#3f3f46;font-weight:400;letter-spacing:0.000px;-webkit-text-stroke:0.2px #3f3f46;">0</div>
<div class="t " style="left:858.72px;top:758.05px;font-size:14.77px;line-height:18.46px;color:#3f3f46;font-weight:400;letter-spacing:0.000px;-webkit-text-stroke:0.2px #3f3f46;">0</div>
<div class="t " style="left:956.32px;top:758.05px;font-size:14.77px;line-height:18.46px;color:#3f3f46;font-weight:400;letter-spacing:0.000px;-webkit-text-stroke:0.2px #3f3f46;">0</div>
<div class="t " style="left:1057.12px;top:758.05px;font-size:14.77px;line-height:18.46px;color:#3f3f46;font-weight:400;letter-spacing:0.000px;-webkit-text-stroke:0.2px #3f3f46;">0</div>
<div class="t " style="left:1166.32px;top:758.05px;font-size:14.77px;line-height:18.46px;color:#3f3f46;font-weight:400;letter-spacing:0.109px;-webkit-text-stroke:0.2px #3f3f46;">0.0 %</div>
<div class="t " style="left:1273.34px;top:758.05px;font-size:14.77px;line-height:18.46px;color:#3f3f46;font-weight:400;letter-spacing:0.936px;-webkit-text-stroke:0.2px #3f3f46;">-- %</div>
<div class="t " style="left:1366.04px;top:758.05px;font-size:14.77px;line-height:18.46px;color:#3f3f46;font-weight:400;letter-spacing:0.936px;-webkit-text-stroke:0.2px #3f3f46;">-- %</div>
<div class="t " style="left:1460.24px;top:758.05px;font-size:14.77px;line-height:18.46px;color:#3f3f46;font-weight:400;letter-spacing:0.936px;-webkit-text-stroke:0.2px #3f3f46;">-- %</div>
<div class="b" style="left:1562.70px;top:755.25px;width:71.50px;height:23.50px;background:#eff4fe;border:1px solid #d3e0fb;border-radius:6px;box-sizing:border-box;"></div>
<svg class="ic" style="left:1570.50px;top:761.25px;width:12px;height:12px;color:#2447d0;" viewBox="0 0 24 24" fill="none" stroke="currentColor" stroke-width="2" stroke-linecap="round" stroke-linejoin="round"><path d="M15 2H6a2 2 0 0 0-2 2v16a2 2 0 0 0 2 2h12a2 2 0 0 0 2-2V7Z"/><path d="M14 2v4a2 2 0 0 0 2 2h4"/><path d="M8 13h2"/><path d="M14 13h2"/><path d="M8 17h2"/><path d="M14 17h2"/></svg>
<div class="t " style="left:1586.71px;top:759.93px;font-size:12.02px;line-height:15.02px;color:#2447d0;font-weight:400;letter-spacing:-0.200px;-webkit-text-stroke:0.45px #2447d0;">DRAFT</div>
<div class="b" style="left:234.00px;top:791.50px;width:1452.00px;height:1.00px;background:#e4e4e7;"></div>
<div class="b" style="left:242.20px;top:818.60px;width:11.80px;height:11.80px;background:#fff;border:1px solid #dcdce0;border-radius:3px;box-sizing:border-box;"></div>
<svg class="ic" style="left:270.00px;top:816.50px;width:16px;height:16px;color:#6b6b73;" viewBox="0 0 24 24" fill="none" stroke="currentColor" stroke-width="1.7" stroke-linecap="round" stroke-linejoin="round"><path d="M15 2H6a2 2 0 0 0-2 2v16a2 2 0 0 0 2 2h12a2 2 0 0 0 2-2V7Z"/><path d="M14 2v4a2 2 0 0 0 2 2h4"/><path d="M8 13h2"/><path d="M14 13h2"/><path d="M8 17h2"/><path d="M14 17h2"/></svg>
<div class="t " style="left:301.59px;top:815.05px;font-size:14.77px;line-height:18.46px;color:#3f3f46;font-weight:400;letter-spacing:0.100px;-webkit-text-stroke:0.2px #3f3f46;">Raj's LinkedIn test #2</div>
<div class="t " style="left:537.73px;top:805.05px;font-size:14.77px;line-height:18.46px;color:#3f3f46;font-weight:400;letter-spacing:0.050px;-webkit-text-stroke:0.2px #3f3f46;">Sep 26,</div>
<div class="t " style="left:537.66px;top:825.05px;font-size:14.77px;line-height:18.46px;color:#3f3f46;font-weight:400;letter-spacing:0.050px;-webkit-text-stroke:0.2px #3f3f46;">2025</div>
<div class="t " style="left:640.97px;top:815.05px;font-size:14.77px;line-height:18.46px;color:#3f3f46;font-weight:400;letter-spacing:0.000px;-webkit-text-stroke:0.2px #3f3f46;">1</div>
<div class="t " style="left:745.57px;top:815.05px;font-size:14.77px;line-height:18.46px;color:#3f3f46;font-weight:400;letter-spacing:0.000px;-webkit-text-stroke:0.2px #3f3f46;">1</div>
<div class="t " style="left:858.72px;top:815.05px;font-size:14.77px;line-height:18.46px;color:#3f3f46;font-weight:400;letter-spacing:0.000px;-webkit-text-stroke:0.2px #3f3f46;">0</div>
<div class="t " style="left:955.77px;top:815.05px;font-size:14.77px;line-height:18.46px;color:#3f3f46;font-weight:400;letter-spacing:0.000px;-webkit-text-stroke:0.2px #3f3f46;">1</div>
<div class="t " style="left:1056.57px;top:815.05px;font-size:14.77px;line-height:18.46px;color:#3f3f46;font-weight:400;letter-spacing:0.000px;-webkit-text-stroke:0.2px #3f3f46;">1</div>
<div class="t " style="left:1166.32px;top:815.05px;font-size:14.77px;line-height:18.46px;color:#3f3f46;font-weight:400;letter-spacing:0.109px;-webkit-text-stroke:0.2px #3f3f46;">0.0 %</div>
<div class="t " style="left:1273.34px;top:815.05px;font-size:14.77px;line-height:18.46px;color:#3f3f46;font-weight:400;letter-spacing:0.936px;-webkit-text-stroke:0.2px #3f3f46;">-- %</div>
<div class="t " style="left:1365.58px;top:815.15px;font-size:14.673px;line-height:18.34px;color:#3f3f46;font-weight:400;letter-spacing:-0.200px;-webkit-text-stroke:0.2px #3f3f46;">100.0 %</div>
<div class="t " style="left:1459.78px;top:815.15px;font-size:14.673px;line-height:18.34px;color:#3f3f46;font-weight:400;letter-spacing:-0.200px;-webkit-text-stroke:0.2px #3f3f46;">100.0 %</div>
<div class="b" style="left:1562.70px;top:812.25px;width:79.60px;height:23.50px;background:#fefcec;border:1px solid #f0e6c8;border-radius:6px;box-sizing:border-box;"></div>
<svg class="ic" style="left:1570.50px;top:818.25px;width:12px;height:12px;color:#935f18;" viewBox="0 0 24 24" fill="none" stroke="currentColor" stroke-width="2" stroke-linecap="round" stroke-linejoin="round"><rect x="14" y="4" width="4" height="16" rx="1"/><rect x="6" y="4" width="4" height="16" rx="1"/></svg>
<div class="t " style="left:1586.74px;top:817.23px;font-size:11.701px;line-height:14.63px;color:#935f18;font-weight:400;letter-spacing:-0.200px;-webkit-text-stroke:0.45px #935f18;">PAUSED</div>
<div class="b" style="left:234.00px;top:856.50px;width:1452.00px;height:1.00px;background:#e4e4e7;"></div>
<div class="b" style="left:242.20px;top:883.60px;width:11.80px;height:11.80px;background:#fff;border:1px solid #dcdce0;border-radius:3px;box-sizing:border-box;"></div>
<svg class="ic" style="left:270.00px;top:881.50px;width:16px;height:16px;color:#6b6b73;" viewBox="0 0 24 24" fill="none" stroke="currentColor" stroke-width="1.7" stroke-linecap="round" stroke-linejoin="round"><circle cx="10" cy="7" r="4"/><path d="M10.3 15H7a4 4 0 0 0-4 4v2"/><circle cx="17" cy="17" r="3"/><path d="m21 21-1.9-1.9"/></svg>
<div class="t " style="left:301.59px;top:880.05px;font-size:14.77px;line-height:18.46px;color:#3f3f46;font-weight:400;letter-spacing:0.100px;-webkit-text-stroke:0.2px #3f3f46;">New Campaign</div>
<div class="t " style="left:537.73px;top:870.05px;font-size:14.77px;line-height:18.46px;color:#3f3f46;font-weight:400;letter-spacing:0.050px;-webkit-text-stroke:0.2px #3f3f46;">Sep 26,</div>
<div class="t " style="left:537.66px;top:890.05px;font-size:14.77px;line-height:18.46px;color:#3f3f46;font-weight:400;letter-spacing:0.050px;-webkit-text-stroke:0.2px #3f3f46;">2025</div>
<div class="t " style="left:641.52px;top:880.05px;font-size:14.77px;line-height:18.46px;color:#3f3f46;font-weight:400;letter-spacing:0.000px;-webkit-text-stroke:0.2px #3f3f46;">0</div>
<div class="t " style="left:746.12px;top:880.05px;font-size:14.77px;line-height:18.46px;color:#3f3f46;font-weight:400;letter-spacing:0.000px;-webkit-text-stroke:0.2px #3f3f46;">0</div>
<div class="t " style="left:858.72px;top:880.05px;font-size:14.77px;line-height:18.46px;color:#3f3f46;font-weight:400;letter-spacing:0.000px;-webkit-text-stroke:0.2px #3f3f46;">0</div>
<div class="t " style="left:956.32px;top:880.05px;font-size:14.77px;line-height:18.46px;color:#3f3f46;font-weight:400;letter-spacing:0.000px;-webkit-text-stroke:0.2px #3f3f46;">0</div>
<div class="t " style="left:1057.12px;top:880.05px;font-size:14.77px;line-height:18.46px;color:#3f3f46;font-weight:400;letter-spacing:0.000px;-webkit-text-stroke:0.2px #3f3f46;">0</div>
<div class="t " style="left:1166.32px;top:880.05px;font-size:14.77px;line-height:18.46px;color:#3f3f46;font-weight:400;letter-spacing:0.109px;-webkit-text-stroke:0.2px #3f3f46;">0.0 %</div>
<div class="t " style="left:1273.34px;top:880.05px;font-size:14.77px;line-height:18.46px;color:#3f3f46;font-weight:400;letter-spacing:0.936px;-webkit-text-stroke:0.2px #3f3f46;">-- %</div>
<div class="t " style="left:1366.04px;top:880.05px;font-size:14.77px;line-height:18.46px;color:#3f3f46;font-weight:400;letter-spacing:0.936px;-webkit-text-stroke:0.2px #3f3f46;">-- %</div>
<div class="t " style="left:1460.24px;top:880.05px;font-size:14.77px;line-height:18.46px;color:#3f3f46;font-weight:400;letter-spacing:0.936px;-webkit-text-stroke:0.2px #3f3f46;">-- %</div>
<div class="b" style="left:1562.70px;top:877.25px;width:71.50px;height:23.50px;background:#eff4fe;border:1px solid #d3e0fb;border-radius:6px;box-sizing:border-box;"></div>
<svg class="ic" style="left:1570.50px;top:883.25px;width:12px;height:12px;color:#2447d0;" viewBox="0 0 24 24" fill="none" stroke="currentColor" stroke-width="2" stroke-linecap="round" stroke-linejoin="round"><path d="M15 2H6a2 2 0 0 0-2 2v16a2 2 0 0 0 2 2h12a2 2 0 0 0 2-2V7Z"/><path d="M14 2v4a2 2 0 0 0 2 2h4"/><path d="M8 13h2"/><path d="M14 13h2"/><path d="M8 17h2"/><path d="M14 17h2"/></svg>
<div class="t " style="left:1586.71px;top:881.93px;font-size:12.02px;line-height:15.02px;color:#2447d0;font-weight:400;letter-spacing:-0.200px;-webkit-text-stroke:0.45px #2447d0;">DRAFT</div>
<div class="b" style="left:234.00px;top:921.50px;width:1452.00px;height:1.00px;background:#e4e4e7;"></div>
<div class="b" style="left:242.20px;top:948.60px;width:11.80px;height:11.80px;background:#fff;border:1px solid #dcdce0;border-radius:3px;box-sizing:border-box;"></div>
<svg class="ic" style="left:270.00px;top:946.50px;width:16px;height:16px;color:#6b6b73;" viewBox="0 0 24 24" fill="none" stroke="currentColor" stroke-width="1.7" stroke-linecap="round" stroke-linejoin="round"><path d="M15 2H6a2 2 0 0 0-2 2v16a2 2 0 0 0 2 2h12a2 2 0 0 0 2-2V7Z"/><path d="M14 2v4a2 2 0 0 0 2 2h4"/><path d="M8 13h2"/><path d="M14 13h2"/><path d="M8 17h2"/><path d="M14 17h2"/></svg>
<div class="t " style="left:301.59px;top:945.05px;font-size:14.77px;line-height:18.46px;color:#3f3f46;font-weight:400;letter-spacing:0.100px;-webkit-text-stroke:0.2px #3f3f46;">Raj's LinkedIn test</div>
<div class="t " style="left:537.73px;top:935.05px;font-size:14.77px;line-height:18.46px;color:#3f3f46;font-weight:400;letter-spacing:0.050px;-webkit-text-stroke:0.2px #3f3f46;">Sep 25,</div>
<div class="t " style="left:537.66px;top:955.05px;font-size:14.77px;line-height:18.46px;color:#3f3f46;font-weight:400;letter-spacing:0.050px;-webkit-text-stroke:0.2px #3f3f46;">2025</div>
<div class="t " style="left:640.97px;top:945.05px;font-size:14.77px;line-height:18.46px;color:#3f3f46;font-weight:400;letter-spacing:0.000px;-webkit-text-stroke:0.2px #3f3f46;">1</div>
<div class="t " style="left:745.57px;top:945.05px;font-size:14.77px;line-height:18.46px;color:#3f3f46;font-weight:400;letter-spacing:0.000px;-webkit-text-stroke:0.2px #3f3f46;">1</div>
<div class="t " style="left:858.72px;top:945.05px;font-size:14.77px;line-height:18.46px;color:#3f3f46;font-weight:400;letter-spacing:0.000px;-webkit-text-stroke:0.2px #3f3f46;">0</div>
<div class="t " style="left:956.32px;top:945.05px;font-size:14.77px;line-height:18.46px;color:#3f3f46;font-weight:400;letter-spacing:0.000px;-webkit-text-stroke:0.2px #3f3f46;">0</div>
<div class="t " style="left:1057.12px;top:945.05px;font-size:14.77px;line-height:18.46px;color:#3f3f46;font-weight:400;letter-spacing:0.000px;-webkit-text-stroke:0.2px #3f3f46;">0</div>
<div class="t " style="left:1166.32px;top:945.05px;font-size:14.77px;line-height:18.46px;color:#3f3f46;font-weight:400;letter-spacing:0.109px;-webkit-text-stroke:0.2px #3f3f46;">0.0 %</div>
<div class="t " style="left:1273.34px;top:945.05px;font-size:14.77px;line-height:18.46px;color:#3f3f46;font-weight:400;letter-spacing:0.936px;-webkit-text-stroke:0.2px #3f3f46;">-- %</div>
<div class="t " style="left:1366.12px;top:945.05px;font-size:14.77px;line-height:18.46px;color:#3f3f46;font-weight:400;letter-spacing:0.109px;-webkit-text-stroke:0.2px #3f3f46;">0.0 %</div>
<div class="t " style="left:1460.32px;top:945.05px;font-size:14.77px;line-height:18.46px;color:#3f3f46;font-weight:400;letter-spacing:0.109px;-webkit-text-stroke:0.2px #3f3f46;">0.0 %</div>
<div class="b" style="left:1562.70px;top:942.25px;width:75.70px;height:23.50px;background:#f0faf2;border:1px solid #d9ecdd;border-radius:6px;box-sizing:border-box;"></div>
<svg class="ic" style="left:1570.50px;top:948.25px;width:12px;height:12px;color:#317d3b;stroke-linejoin:miter;" viewBox="0 0 24 24" fill="none" stroke="currentColor" stroke-width="1.7" stroke-linecap="round" stroke-linejoin="round"><polygon points="6 3 20 12 6 21 6 3"/></svg>
<div class="t " style="left:1587.68px;top:946.75px;font-size:12.195px;line-height:15.24px;color:#317d3b;font-weight:400;letter-spacing:-0.200px;-webkit-text-stroke:0.45px #317d3b;">ACTIVE</div>
</div>
<div class="b" style="left:1668.50px;top:928.40px;width:45.00px;height:45.00px;background:#000;border-radius:50%;"></div>
<svg class="ic" style="left:1668.4px;top:928.4px;width:45px;height:45px" viewBox="0 0 45 45"><circle cx="22.65" cy="21.4" r="11.25" fill="#fff"/><path d="M23.5 31.8 L28.3 36.2 L28.3 30.5 Z" fill="#fff"/><g stroke="#000" stroke-width="2" stroke-linecap="round"><path d="M17.1 15.7H21.7"/><path d="M14.4 19.9H21.7"/><path d="M14.6 24.2H21.7"/></g></svg>
<div class="b" style="left:1700.00px;top:927.90px;width:18.00px;height:18.00px;background:#d3302a;border-radius:50%;box-shadow:0 1px 3px rgba(0,0,0,.25);"></div>
<svg class="ic" style="left:1700px;top:928px;width:18px;height:18px" viewBox="1700 928 18 18"><path d="M1706.6 934.7 L1709.1 932.6 L1710.8 932.6 L1710.8 941.5 L1709.1 941.5 L1709.1 935.3 L1706.6 936.5 Z" fill="#fff"/></svg>
</body></html>
